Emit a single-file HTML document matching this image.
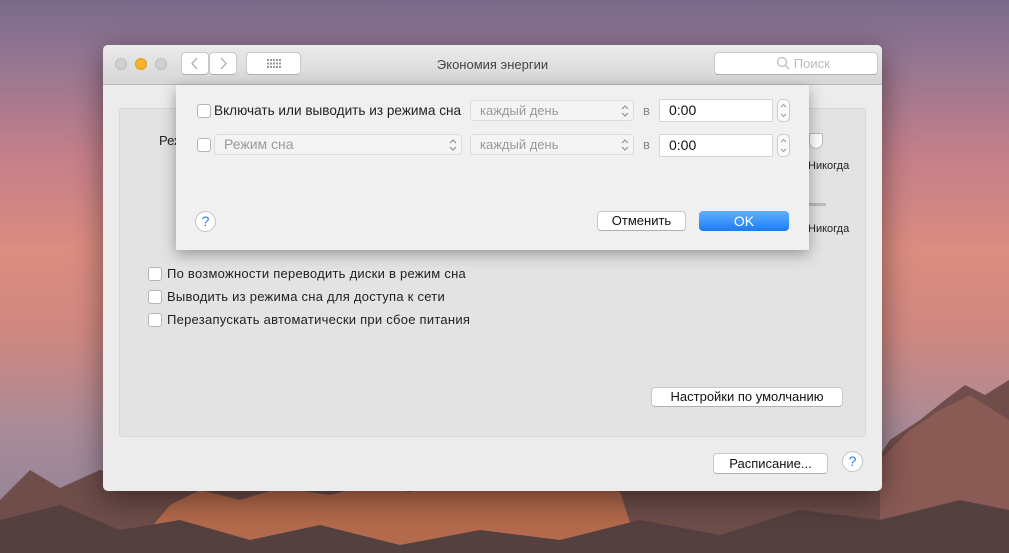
<!DOCTYPE html>
<html><head><meta charset="utf-8"><style>
*{box-sizing:border-box;margin:0;padding:0}
body{width:1009px;height:553px;overflow:hidden;position:relative;font-family:"Liberation Sans","DejaVu Sans",sans-serif;font-size:13px;color:#222;
background:linear-gradient(180deg,#7a6a8a 0%,#927592 10%,#c47f8a 28%,#dc8c80 45%,#d08880 60%,#a88a98 78%,#8a8398 100%);}
.abs{position:absolute}
.win{left:103px;top:45px;width:779px;height:446px;background:#ececec;border-radius:5px;box-shadow:0 8px 30px rgba(0,0,0,.45);overflow:hidden}
.tb{left:0;top:0;width:779px;height:40px;background:linear-gradient(#ebebeb,#d6d6d6);border-bottom:1px solid #b9b9b9}
.light{width:12px;height:12px;border-radius:50%;top:13px;background:#d0d0d0;border:1px solid #bdbdbd}
.btn{background:#fff;border:1px solid #c8c8c8;border-bottom-color:#b0b0b0;border-radius:4px;text-align:center;color:#111}
.cb{width:14px;height:14px;background:#fff;border:1px solid #b5b5b5;border-radius:3px}
.pop{background:#f4f4f4;border:1px solid #dcdcdc;border-radius:4px;color:#999;padding-left:9px;line-height:19px}
.arr{position:absolute;right:4px;top:2px;width:8px;height:15px}
.fld{background:#fff;border:1px solid #d6d6d6;font-size:14px;padding-left:9px;line-height:20px;color:#111}
.stp{width:13px;height:23px;border:1px solid #ccc;border-radius:5px;background:#fafafa}
.help{width:21px;height:21px;border-radius:50%;background:#fff;border:1px solid #c4c4c4;color:#2a7bff;text-align:center;line-height:19px;font-size:14px}
.t{letter-spacing:0.25px}
</style></head><body>
<svg class="abs" style="left:0;top:0" width="1009" height="553">
<polygon fill="#6e4d4a" points="0,553 0,500 30,470 60,488 100,470 150,480 200,465 240,480 300,470 360,488 420,475 480,490 540,485 600,478 680,482 740,490 800,480 870,470 890,440 920,420 945,400 965,385 985,395 1009,380 1009,553"/>
<polygon fill="#b46a4c" points="130,553 170,505 200,490 240,500 280,488 330,495 370,485 410,492 460,478 520,488 560,480 620,492 640,553"/>
<polygon fill="#8a5a55" points="880,553 880,460 910,430 940,410 970,395 1009,420 1009,553"/>
<polygon fill="#54403f" points="0,553 0,520 60,505 120,530 180,520 250,540 320,525 400,545 480,530 560,540 640,520 720,535 800,510 880,520 960,500 1009,510 1009,553"/>
</svg>
<div class="abs win">
 <div class="abs tb">
  <div class="abs light" style="left:12px"></div>
  <div class="abs light" style="left:32px;background:#f5b42a;border-color:#dd9e1c"></div>
  <div class="abs light" style="left:52px"></div>
  <div class="abs btn" style="left:78px;top:7px;width:28px;height:23px"><svg width="26" height="21"><path d="M15 5 L10 10.5 L15 16" fill="none" stroke="#aaa" stroke-width="1.3"/></svg></div>
  <div class="abs btn" style="left:106px;top:7px;width:28px;height:23px"><svg width="26" height="21"><path d="M11 5 L16 10.5 L11 16" fill="none" stroke="#aaa" stroke-width="1.3"/></svg></div>
  <div class="abs btn" style="left:143px;top:7px;width:55px;height:23px"><svg width="53" height="21"><g fill="#999"><rect x="20" y="6" width="2" height="2"/><rect x="23" y="6" width="2" height="2"/><rect x="26" y="6" width="2" height="2"/><rect x="29" y="6" width="2" height="2"/><rect x="32" y="6" width="2" height="2"/><rect x="20" y="9.5" width="2" height="2"/><rect x="23" y="9.5" width="2" height="2"/><rect x="26" y="9.5" width="2" height="2"/><rect x="29" y="9.5" width="2" height="2"/><rect x="32" y="9.5" width="2" height="2"/><rect x="20" y="13" width="2" height="2"/><rect x="23" y="13" width="2" height="2"/><rect x="26" y="13" width="2" height="2"/><rect x="29" y="13" width="2" height="2"/><rect x="32" y="13" width="2" height="2"/></g></svg></div>
  <div class="abs" style="left:0;width:779px;top:12px;text-align:center;color:#444">Экономия энергии</div>
  <div class="abs btn" style="left:611px;top:7px;width:164px;height:23px;color:#bbb;line-height:21px;padding-left:14px"><svg width="14" height="14" style="vertical-align:-2px"><circle cx="6" cy="6" r="4.5" fill="none" stroke="#bbb" stroke-width="1.2"/><path d="M9.3 9.3 L13 13" stroke="#bbb" stroke-width="1.3"/></svg> Поиск</div>
 </div>
 <div class="abs" style="left:16px;top:63px;width:747px;height:329px;background:#e3e3e3;border:1px solid #d8d8d8;border-radius:3px"></div>
 <div class="abs" style="left:56px;top:88px">Реж</div>
 <div class="abs" style="left:706px;top:88px;width:14px;height:16px;background:#fff;border:1px solid #bbb;border-radius:2px 2px 7px 7px"></div>
 <div class="abs" style="left:705px;top:115px;font-size:11px">Никогда</div>
 <div class="abs" style="left:705px;top:158px;width:18px;height:3px;background:#bbb"></div>
 <div class="abs" style="left:705px;top:178px;font-size:11px">Никогда</div>
 <div class="abs cb" style="left:45px;top:222px"></div><div class="abs t" style="left:64px;top:221px">По возможности переводить диски в режим сна</div>
 <div class="abs cb" style="left:45px;top:245px"></div><div class="abs t" style="left:64px;top:244px">Выводить из режима сна для доступа к сети</div>
 <div class="abs cb" style="left:45px;top:268px"></div><div class="abs t" style="left:64px;top:267px">Перезапускать автоматически при сбое питания</div>
 <div class="abs btn" style="left:548px;top:342px;width:192px;height:20px;line-height:18px">Настройки по умолчанию</div>
 <div class="abs btn" style="left:610px;top:408px;width:115px;height:21px;line-height:19px">Расписание...</div>
 <div class="abs help" style="left:739px;top:406px">?</div>
</div>
<div class="abs" style="left:176px;top:85px;width:633px;height:165px;background:#f0f0f0;box-shadow:0 4px 14px rgba(0,0,0,.35)">
 <div class="abs cb" style="left:21px;top:19px"></div>
 <div class="abs" style="left:38px;top:18px;font-size:13.6px">Включать или выводить из режима сна</div>
 <div class="abs pop" style="left:294px;top:15px;width:164px;height:21px">каждый день<svg class="arr"><path d="M1 6 L4 3 L7 6 M1 10 L4 13 L7 10" fill="none" stroke="#888" stroke-width="1"/></svg></div>
 <div class="abs" style="left:467px;top:18px;color:#888">в</div>
 <div class="abs fld" style="left:483px;top:14px;width:114px;height:23px">0:00</div>
 <div class="abs stp" style="left:601px;top:14px"><svg width="11" height="21"><path d="M3 7 L5.5 4.5 L8 7 M3 14 L5.5 16.5 L8 14" fill="none" stroke="#999" stroke-width="1"/></svg></div>
 <div class="abs cb" style="left:21px;top:53px"></div>
 <div class="abs pop" style="left:38px;top:49px;width:248px;height:21px;font-size:14px">Режим сна<svg class="arr"><path d="M1 6 L4 3 L7 6 M1 10 L4 13 L7 10" fill="none" stroke="#888" stroke-width="1"/></svg></div>
 <div class="abs pop" style="left:294px;top:49px;width:164px;height:21px">каждый день<svg class="arr"><path d="M1 6 L4 3 L7 6 M1 10 L4 13 L7 10" fill="none" stroke="#888" stroke-width="1"/></svg></div>
 <div class="abs" style="left:467px;top:52px;color:#888">в</div>
 <div class="abs fld" style="left:483px;top:49px;width:114px;height:23px">0:00</div>
 <div class="abs stp" style="left:601px;top:49px"><svg width="11" height="21"><path d="M3 7 L5.5 4.5 L8 7 M3 14 L5.5 16.5 L8 14" fill="none" stroke="#999" stroke-width="1"/></svg></div>
 <div class="abs help" style="left:19px;top:126px">?</div>
 <div class="abs btn" style="left:421px;top:126px;width:89px;height:20px;line-height:18px">Отменить</div>
 <div class="abs" style="left:523px;top:126px;width:90px;height:20px;border-radius:4px;background:linear-gradient(#5fb0ff,#1c7cf5);color:#fff;text-align:center;line-height:20px;font-size:14px">OK</div>
</div>
</body></html>
